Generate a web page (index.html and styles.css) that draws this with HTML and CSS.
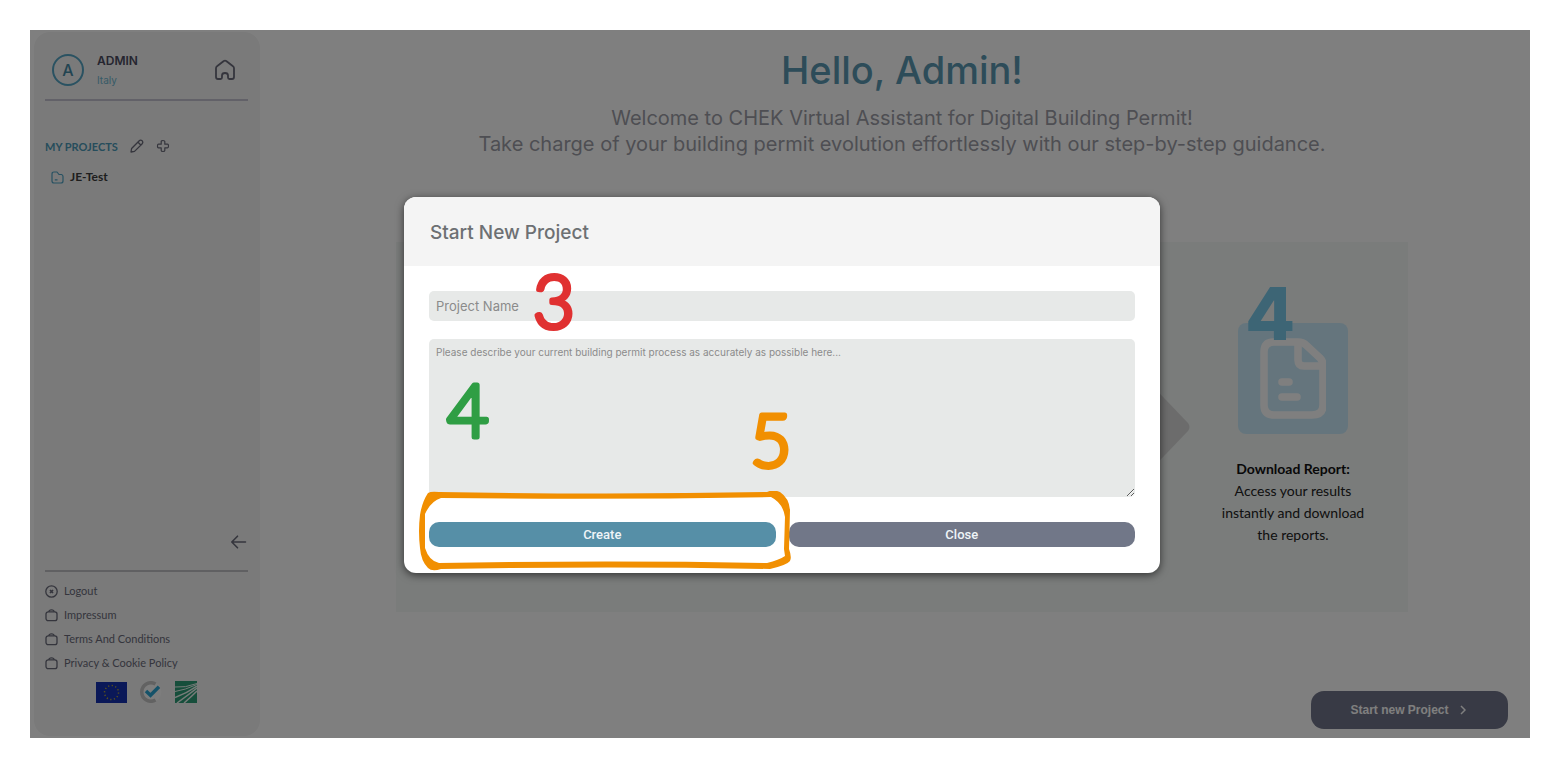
FILE: index.html
```html
<!DOCTYPE html>
<html lang="en">
<head>
<meta charset="utf-8">
<title>CHEK Virtual Assistant</title>
<link rel="stylesheet" href="styles.css">
</head>
<body>
<div class="app">
  <aside class="sidebar">
    <header class="profile">
      <span class="avatar">A</span>
      <div class="who">
        <strong class="user-name">ADMIN</strong>
        <span class="user-place">Italy</span>
      </div>
      <a class="home" href="#" aria-label="Home">
        <svg width="22" height="22" viewBox="0 0 22 22" fill="none" stroke="currentColor" stroke-width="1.800" stroke-linejoin="round"><path d="M2 9.200Q2 8 3 7.300L9.800 2Q11 1.200 12.200 2L19 7.300Q20 8 20 9.200V18Q20 20 18 20H15.500Q14 20 14 18.500V16.500Q14 14 11 14T8 16.500V18.500Q8 20 6.500 20H4Q2 20 2 18Z"/></svg>
      </a>
    </header>
    <section class="projects">
      <div class="projects-head">
        <h2 class="projects-title">MY PROJECTS</h2>
        <button class="icon-button" type="button" aria-label="Edit projects">
          <svg width="14" height="14" viewBox="0 0 14 14" fill="none" stroke="currentColor" stroke-width="1.300" stroke-linejoin="round"><path d="M1 13L1.600 9.500L9 2Q10.500 .5 12.200 1.800Q13.500 3.500 12 5L4.500 12.400ZM8 3.200L10.800 6"/></svg>
        </button>
        <button class="icon-button" type="button" aria-label="Add project">
          <svg width="14" height="14" viewBox="0 0 14 14" fill="none" stroke="currentColor" stroke-width="1.200" stroke-linejoin="round"><path d="M5.200 2.500Q5.200 1.500 7 1.500T8.800 2.500V5.200H11.500Q12.500 5.200 12.500 7T11.500 8.800H8.800V11.500Q8.800 12.500 7 12.500T5.200 11.500V8.800H2.500Q1.500 8.800 1.500 7T2.500 5.200H5.200Z"/></svg>
        </button>
      </div>
      <a class="project" href="#">
        <svg class="project-icon" width="13" height="13" viewBox="0 0 13 13" fill="none" stroke="currentColor" stroke-width="1.200" stroke-linejoin="round"><path d="M1 3Q1 1 3 1H6L8 3.500H10.500Q12 4 12 5.500V10Q12 12 10 12H3Q1 12 1 10ZM3.800 8.800H6.500"/></svg>
        JE-Test
      </a>
    </section>
    <button class="collapse" type="button" aria-label="Collapse sidebar">
      <svg width="18" height="14" viewBox="0 0 18 14" fill="none" stroke="currentColor" stroke-width="1.600" stroke-linecap="round" stroke-linejoin="round"><path d="M15.500 7H2M7.500 1.200L1.800 7L7.500 12.800"/></svg>
    </button>
    <nav class="links">
      <a class="link" href="#"><svg width="13" height="13" viewBox="0 0 13 13" fill="none" stroke="currentColor" stroke-width="1.300"><circle cx="6.500" cy="6.500" r="5.700"/><path stroke-width="1.700" d="M5 5L8 8M8 5L5 8"/></svg>Logout</a>
      <a class="link" href="#"><svg width="13" height="13" viewBox="0 0 13 13" fill="none" stroke="currentColor" stroke-width="1.300"><rect x="1" y="2.900" width="11" height="8.800" rx="2.200"/><path d="M3.800 2.900Q4 .9 6.500 .9T9.200 2.900"/></svg>Impressum</a>
      <a class="link" href="#"><svg width="13" height="13" viewBox="0 0 13 13" fill="none" stroke="currentColor" stroke-width="1.300"><rect x="1" y="2.900" width="11" height="8.800" rx="2.200"/><path d="M3.800 2.900Q4 .9 6.500 .9T9.200 2.900"/></svg>Terms And Conditions</a>
      <a class="link" href="#"><svg width="13" height="13" viewBox="0 0 13 13" fill="none" stroke="currentColor" stroke-width="1.300"><rect x="1" y="2.900" width="11" height="8.800" rx="2.200"/><path d="M3.800 2.900Q4 .9 6.500 .9T9.200 2.900"/></svg>Privacy &amp; Cookie Policy</a>
    </nav>
    <div class="partners">
      <svg width="31" height="21" viewBox="0 0 31 21"><path fill="#1430b0" d="M0 0h31v21H0z"/><circle cx="15.500" cy="10.500" r="7" fill="none" stroke="#bba830" stroke-width="1.500" stroke-dasharray="1.200 2.465"/></svg>
      <svg width="22" height="22" viewBox="0 0 22 22" fill="none"><circle cx="11" cy="11" r="10.500" fill="#fafafa"/><path stroke="#c4c4c4" stroke-width="3.500" d="M15.500 3A9.200 9.200 0 1 0 15.500 19"/><path stroke="#2ba5d2" stroke-width="3.500" d="M6 10L10.500 14.200L19 5.800"/></svg>
      <svg width="22" height="22" viewBox="0 0 22 22"><path fill="#2c9c76" d="M0 0h22v22H0z"/><path fill="none" stroke="#eef6f2" d="M0 6Q10 7 22 2.500M0 10.500Q10 9 22 3.500"/><path fill="none" stroke="#eef6f2" stroke-width="1.500" d="M0 16.500Q12 12 22 5M2 22Q13 14 22 7M9 22Q16 16 22 10"/></svg>
    </div>
  </aside>

  <main class="main">
    <h1 class="greeting">Hello, Admin!</h1>
    <p class="intro">Welcome to CHEK Virtual Assistant for Digital Building Permit!<br>Take charge of your building permit evolution effortlessly with our step-by-step guidance.</p>
    <section class="steps">
      <svg class="step-arrow" width="60" height="110" viewBox="0 0 60 110"><path fill="#d9d9d9" d="M0 0Q9 0 13 4L58 51Q61 55 58 59L13 106Q9 110 0 110Z"/></svg>
      <article class="step">
        <div class="step-card">
          <span class="step-number">4</span>
          <svg width="66" height="81" viewBox="0 0 66 81" fill="none" stroke="currentColor" stroke-width="7.500" stroke-linejoin="round" stroke-linecap="round"><path d="M14 4H38Q43 4 46 7L60 20Q63 23 63 27V67Q63 77 52 77H14Q4 77 4 67V14Q4 4 14 4Z"/><path d="M38 5V22Q38 28 44 28H62M22 44H29M22 59H37"/></svg>
        </div>
        <h3 class="step-title">Download Report:</h3>
        <p class="step-text">Access your results<br>instantly and download<br>the reports.</p>
      </article>
    </section>
    <button class="start" type="button">Start new Project
      <svg width="6" height="10" viewBox="0 0 6 10" fill="none" stroke="currentColor" stroke-width="1.500"><path d="M1 1L5 5L1 9"/></svg>
    </button>
  </main>

  <div class="backdrop">
    <form class="modal" role="dialog" aria-labelledby="modal-title">
      <header class="modal-head"><h2 class="modal-title" id="modal-title">Start New Project</h2></header>
      <div class="modal-body">
        <input class="field" type="text" placeholder="Project Name" aria-label="Project Name">
        <textarea class="field field-area" placeholder="Please describe your current building permit process as accurately as possible here..." aria-label="Process description"></textarea>
        <div class="actions">
          <button class="action action-create" type="button">Create</button>
          <button class="action action-close" type="button">Close</button>
        </div>
      </div>
      <svg class="mark mark-three" width="64" height="110" viewBox="0 0 64 110"><text class="digit" x="10" y="80">3</text></svg>
      <svg class="mark mark-four" width="64" height="110" viewBox="0 0 64 110"><text class="digit" x="10" y="80">4</text></svg>
      <svg class="mark mark-five" width="64" height="110" viewBox="0 0 64 110"><text class="digit" x="10" y="80">5</text></svg>
      <svg class="mark mark-frame" width="374" height="82" viewBox="0 0 374 82" aria-hidden="true"><path fill="#f18f01" fill-rule="evenodd" d="M9 2Q12 0 20 1Q190 4 348 1Q354 -2 361 1Q370 7 371 19L370 58Q373 66 371 70Q368 74 351 78Q190 75 22 78Q13 81 9 77Q2 70 1 57Q-1 40 1 24Q3 11 9 2ZM22 7Q12 10 6 23L6 57Q10 70 20 72Q190 69 348 72Q360 69 366 65L365 58L366 26Q364 12 352 6Q190 9 22 7Z"/></svg>
    </form>
  </div>
</div>
</body>
</html>
```
FILE: styles.css
```css
* { box-sizing: border-box; }
body { margin: 0; padding: 30px 30px 29px; background: #fff; font-family: Lato, "Noto Sans", sans-serif; color: #222; }
h1, h2, h3, p { margin: 0; }
a { color: inherit; text-decoration: none; }
button { border: 0; padding: 0; background: none; color: inherit; cursor: pointer; }
svg { display: block; flex: none; }

.app { position: relative; display: flex; min-height: calc(100vh - 59px); background: #fff; }

.sidebar { display: flex; flex-direction: column; width: 226px; margin: 2px 0 2px 4px; padding: 0 12px 33px 11px; border-radius: 16px; background: #f4f4f4; color: #6a6b7a; }
.profile { display: flex; align-items: center; height: 69px; padding: 8px 12px 0 7px; border-bottom: 2px solid #c4c2d0; }
.avatar { display: flex; align-items: center; justify-content: center; width: 32px; height: 32px; border: 2px solid #55a5c4; border-radius: 50%; font: 500 16px Inter, sans-serif; color: #4489a4; }
.who { display: flex; flex: 1; flex-direction: column; gap: 4px; margin-left: 13px; font-family: Inter, sans-serif; }
.user-name { font-size: 12px; line-height: 16px; font-weight: 600; color: #4b4b60; }
.user-place { font-size: 10px; line-height: 14px; color: #6fb5cf; }
.projects { display: flex; flex: 1; flex-direction: column; gap: 15px; padding-top: 37px; }
.projects-head { display: flex; align-items: center; gap: 12px; height: 16px; }
.projects-title { font-size: 11px; font-weight: 700; color: #4c9ab8; }
.project { display: flex; align-items: center; gap: 6px; padding-left: 6px; font-size: 12px; line-height: 16px; font-weight: 700; color: #3c3c3c; }
.project-icon { color: #4fa3c4; }
.collapse { align-self: flex-end; margin-bottom: 21px; }
.links { display: flex; flex-direction: column; gap: 8px; padding-top: 11px; border-top: 2px solid #c0c0c4; }
.link { display: flex; align-items: center; gap: 6px; font-size: 11px; line-height: 16px; }
.partners { display: flex; align-items: center; gap: 13px; margin-top: 10px; padding-left: 51px; }

.main { display: flex; flex: 1; flex-direction: column; align-items: center; padding: 15px 0 9px 14px; }
.greeting { font: 500 38px/50px Inter, sans-serif; color: #5a99b2; }
.intro { margin-top: 10px; font: 400 20px/26px Inter, sans-serif; text-align: center; color: #9c9da6; }
.steps { display: flex; justify-content: flex-end; width: calc(100% - 244px); height: 370px; margin-top: 85px; background: #f4f8f6; }
.step-arrow { margin-top: 130px; }
.step { display: flex; flex-direction: column; align-items: center; width: 218px; padding: 81px 12px 0 0; font-size: 14px; line-height: 22px; text-align: center; }
.step-card { position: relative; display: flex; justify-content: center; width: 110px; height: 111px; padding-top: 15px; border-radius: 8px; background: #caebfa; color: #fff; }
.step-number { position: absolute; top: -37px; left: 7px; font: 800 73px/56px Inter, sans-serif; color: #7acaea; }
.step-title { margin-top: 24px; font-size: 14px; font-weight: 700; color: #111; }
.start { display: flex; align-items: center; justify-content: center; align-self: flex-end; gap: 11px; width: 197px; height: 38px; margin: auto 22px 0 0; padding-right: 3px; border-radius: 13px; background: #71758a; font: bold 12px "Liberation Sans", sans-serif; color: #fff; }

.backdrop { position: absolute; inset: 0; display: flex; align-items: center; justify-content: center; padding: 2px 0 0 4px; background: rgba(0, 0, 0, 0.5); }
.modal { position: relative; width: 756px; max-width: 100%; border-radius: 12px; background: #fff; box-shadow: 0 2px 8px rgba(0, 0, 0, 0.6); }
.modal-head { padding: 23px 26px 20px; border-radius: 12px 12px 0 0; background: #f4f4f4; }
.modal-title { font: 500 19px/26px Inter, sans-serif; color: #6d7073; }
.modal-body { display: flex; flex-direction: column; gap: 18px; padding: 25px 25px 26px; }
.field { display: block; width: 100%; height: 30px; margin: 0; padding: 0 7px; border: 0; border-radius: 5px; background: #e7e9e8; font: 400 13px Inter, sans-serif; color: #444; }
.field-area { height: 158px; padding: 7px; font-size: 10px; resize: vertical; }
.field::placeholder { color: #8b8b8b; opacity: 1; }
.actions { display: grid; grid-template-columns: 1fr 1fr; gap: 13px; padding-top: 7px; }
.action { height: 25px; border-radius: 10px; font: 500 13px Roboto, sans-serif; color: #eef4f7; }
.action-create { background: #568fa7; }
.action-close { background: #717788; }

.mark { position: absolute; pointer-events: none; }
.digit { font: 300 72px Lato, sans-serif; fill: currentColor; stroke: currentColor; stroke-width: 5px; stroke-linejoin: round; }
.mark-three { top: 51px; left: 119px; color: #e03131; }
.mark-four { top: 160px; left: 33px; color: #2f9e44; }
.mark-five { top: 190px; left: 336px; color: #f18f01; }
.mark-frame { top: 294px; left: 15px; }
```
